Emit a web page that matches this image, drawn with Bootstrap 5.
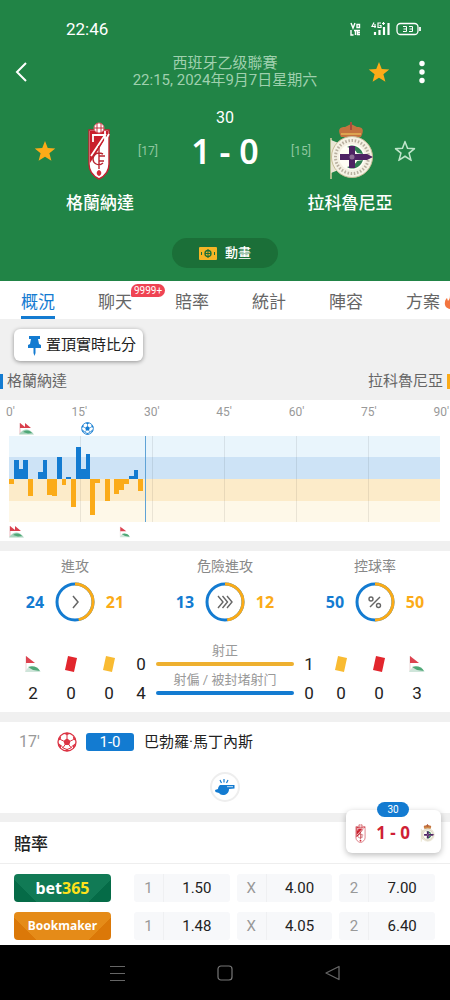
<!DOCTYPE html>
<html lang="zh-Hant">
<head>
<meta charset="utf-8">
<meta name="viewport" content="width=device-width, initial-scale=1">
<title>格蘭納達 1 - 0 拉科魯尼亞</title>
<link href="https://cdn.jsdelivr.net/npm/bootstrap@5.3.0/dist/css/bootstrap.min.css" rel="stylesheet">
<style>
:root{--blue:#137bd1;--gold:#fbab18;--green:#218446;--line:#f0f0f0}
body{font-family:Roboto,"Noto Sans CJK TC",sans-serif;font-size:15px;line-height:20px;color:#222;background:#fff;overflow-x:hidden}
button{font:inherit;color:inherit}
svg{display:block;flex:none}
.plain{background:none;border:0;padding:0}
.hero{background:var(--green);color:#fff;height:281px}
.statusbar{padding:19px 28px 0 66px;font-size:17px}
.topnav{padding:15px 25px 0 14px;height:50px}
.topnav .side-l{width:68px}
.topnav .side-r{width:57px}
.league{font-size:15px;line-height:17px;color:#9fd0ae}
.clock{font-size:16px;margin-top:19px}
.match{padding:0 34px;margin-top:-6px}
.scoreline{font-family:"Noto Sans",sans-serif;font-weight:600;font-size:34px;line-height:40px;width:72px;white-space:nowrap}
.match .rank{font-size:12px;color:#8fc69f;width:22px;margin:0 29px 0 17px}
.match .rank.away{margin:0 16px 0 30px}
.crest-box{width:44px}
.teamname{font-size:17px;line-height:24px;font-weight:500;width:150px}
.names{padding:0 25px;margin-top:11px}
.anim{background:#1b6f38;border:0;border-radius:16px;height:30px;width:106px;font-size:13px;font-weight:500;margin-top:23px}
.tabs{height:38px;padding-left:21px;gap:43px;font-size:17px;overflow:hidden}
.tabs a{color:#666;text-decoration:none;flex:none;height:38px;line-height:24px;padding-top:6px;position:relative;display:flex;align-items:center;border-bottom:3px solid transparent}
.tabs a.active{color:var(--blue);border-bottom-color:var(--blue)}
.count{position:absolute;left:33px;top:3px;height:13px;line-height:13px;border-radius:7px 7px 7px 2px;background:#ef4453;color:#fff;font-size:10px;padding:0 3px}
.band{background:var(--line)}
.pinbar{padding:10px 14px}
.pinbtn{background:#fff;border:0;border-radius:6px;height:32px;padding:0 7px 0 13px;box-shadow:0 1px 4px #0006}
.legend{height:29px;color:#666;padding-bottom:9px}
.legend i{width:3px;height:15px;background:var(--blue)}
.legend i.away{background:var(--gold)}
.axis{padding:4px 1px 0 6px;font-size:12px;line-height:17px;color:#999}
.momentum{padding:0 10px 0 9px}
.events90{display:grid;grid-template-columns:repeat(90,1fr);height:15px;align-items:center}
.corner-a{grid-column:3}.goal-a{grid-column:16}.corner-b{grid-column:1}.corner-c{grid-column:24}
.events90 svg{margin-right:-20px}
.events90.low{height:19px}
.gap-band{height:10px;background:var(--line)}
.gap-band.thin{height:9px}
.stats{padding-top:6px;height:161px}
.stats h3{font-size:14px;line-height:18px;font-weight:400;color:#888;margin:0 0 7px}
.versus{font-family:"Noto Sans",sans-serif;font-weight:700;font-size:16px;gap:10px}
.versus span{width:20px}
.home-c{color:var(--blue)}.away-c{color:var(--gold)}
.tally{display:grid;grid-template-columns:38px 38px 38px 26px 1fr 26px 38px 38px 38px;grid-auto-rows:29px;padding:0 14px;margin-top:22px;align-items:end;justify-items:center;font-size:17px;line-height:18px}
.shots{width:100%;padding:0 2px 7px;text-align:center;font-size:13px;line-height:14px;color:#999;white-space:nowrap}
.bar-h{height:4px;border-radius:2px;margin-top:4px;background:var(--blue)}
.bar-h.away{background:#eeb02f}
.feed{height:91px;padding:10px 19px 0}
.feed .minute{width:38px;font-size:16px;color:#999}
.tag-score{background:var(--blue);color:#fff;border-radius:3px;width:48px;height:18px;line-height:18px;text-align:center;margin:0 10px 0 9px}
.whistle{width:30px;height:30px;border:2px solid #eee;border-radius:50%;margin-top:20px}
.odds{position:relative;padding-bottom:5px}
.odds h2{font-size:17px;line-height:24px;font-weight:500;margin:0;padding:10px 14px 7px;border-bottom:1px solid #eee}
.oddsrow{padding:10px 15px 0 14px;gap:7px}
.book{width:97px;height:28px;border:0;border-radius:4px;color:#fff;margin-right:16px;padding:0;line-height:28px;font-family:"Noto Sans",sans-serif;font-weight:700;background:linear-gradient(45deg,#056b47 18%,#117a55 18% 50%,transparent 50%),linear-gradient(-45deg,#056b47 18%,#117a55 18%)}
.book.b365{font-size:16px}
.book.b365 span{color:#ffe11b}
.book.maker{font-size:12px;background:linear-gradient(45deg,#db7808 18%,#e58b18 18% 50%,transparent 50%),linear-gradient(-45deg,#db7808 18%,#e58b18 18%)}
.price{flex:1 1 0;height:28px;line-height:28px;background:#f7f8fa;border:0;border-radius:3px;padding:0}
.price small{width:30px;font-size:15px;color:#999;border-right:1px solid #eff0f2}
.mini{position:absolute;right:9px;top:-12px;width:95px;height:43px;background:#fff;border:0;border-radius:6px;box-shadow:0 2px 6px #0004;padding:3px 6px 0 9px}
.mini b{font-family:"Noto Sans",sans-serif;font-weight:700;font-size:17px;color:#cf1f35}
.mini .now{position:absolute;left:31px;top:-8px;width:32px;height:15px;line-height:15px;border-radius:8px;background:var(--blue);color:#fff;font-size:10px}
.sysnav{background:#000;height:55px;padding:0 109px}
</style>
</head>
<body class="d-flex flex-column min-vh-100">
<svg width="0" height="0" class="position-absolute" aria-hidden="true">
  <symbol id="star" viewBox="0 0 24 24"><path d="M12 1l3 7.800 8.200.5-6.400 5.200 2.200 8.200L12 18.200 5 22.700l2.200-8.200L.8 9.300 9 8.800z"/></symbol>
  <symbol id="ball" viewBox="0 0 24 24"><circle cx="12" cy="12" r="10.800" fill="#fff" stroke="currentColor" stroke-width="1.600"/><path fill="currentColor" d="M12 7.600l4.300 3.100-1.600 5H9.300l-1.600-5zM8.200 1.800L12 4l3.800-2.200L12 .8zM1 10.500l3.400-1.300.6-4-3 2.600zM23 10.500l-3.400-1.300-.6-4 3 2.600zM4.600 20l.4-4-3-2.400L3 18zM19.400 20l-.4-4 3-2.400L21 18zM9 22.600l3-2.400 3 2.400-3 .6z"/><path fill="none" stroke="currentColor" stroke-width="1.200" d="M12 8V3.500M16 10.800l4-1.800M14.500 15.500l2.500 3.500M9.500 15.500L7 19M8 10.800L4 9M5 16l2 3 5 2 5-2 2-3"/></symbol>
  <symbol id="corner" viewBox="0 0 18 18"><path d="M2 1v15" stroke="#ead6d6"/><path d="M2 1l9 7H2z" fill="#dd4350"/><path d="M1 17c2-5 6-6 9-5 3 0 4 3 7 5z" fill="#cfe5da"/><path d="M4 12c5-2 10 0 12 4l-7-1z" fill="#4fa877"/></symbol>
  <symbol id="corners" viewBox="0 0 16 12"><path d="M1 0v11" stroke="#e9b5bb"/><path d="M1 0l5 4V0l6 5H1z" fill="#d93f4c"/><path d="M0 11.500c4-6 10-7 15 0z" fill="#a9d3bd"/><path d="M4 9c3-2 6-2 9 1l-4 .5z" fill="#4fa877"/></symbol>
  <symbol id="cardshape" viewBox="0 0 14 18"><path d="M4 1l9 2-3 14-9-2z" fill="currentColor"/></symbol>
  <symbol id="granada" viewBox="0 0 24 58">
    <path d="M2 8h20v34c0 7-4 12-10 15C6 54 2 49 2 42z" fill="#fff" stroke="#c2212f" stroke-width="1.400"/>
    <path d="M3 9h18v4L3 41z" fill="#c91f2c"/><path d="M5 13h13L4 34M6 13v7M18 9v13M22 12L11 31" stroke="#fff" stroke-width="1.800" fill="none"/>
    <circle cx="12" cy="6" r="5" fill="#fff" stroke="#d86b70" stroke-width="1"/><path d="M7 6h10M10 1v10M14 1v10" stroke="#c2212f" stroke-width=".9"/>
    <path d="M16 32c-6-3-10 1-10 5s5 8 10 4M12 24v23M12 34h6M12 39h5" stroke="#b8252f" stroke-width="1.400" fill="none"/>
    <path d="M12 48c3 1 3 5 0 6-3-1-3-5 0-6z" fill="#d12c38"/>
  </symbol>
  <symbol id="depor" viewBox="0 0 44 58">
    <path d="M2 16v41" stroke="#d9cfa4" stroke-width="1.500"/><path d="M2 18l10 4v25L2 51z" fill="#e9e6d5"/>
    <path d="M12 15c-4-8-1-10 4-10l6-3 6 3c5 0 8 2 4 10z" fill="#c4733f"/><path d="M21 0h2v8h-2z" fill="#a84c3c"/><path d="M12 12h20" stroke="#e6b557" stroke-width="1.500"/>
    <circle cx="23" cy="35" r="20.500" fill="#f5f1e4" stroke="#c8bd97"/>
    <circle cx="23" cy="35" r="16.500" fill="none" stroke="#b9b0a0" stroke-width="3" stroke-dasharray="1.500 1.700"/>
    <circle cx="23" cy="35" r="13" fill="#fffdf5"/>
    <path d="M18 25c6-4 14 0 16 7l-6-1c-1-3-5-5-10-6zM18 45c6 4 14 0 16-7l-6 1c-1 3-5 5-10 6z" fill="#2e7e51"/>
    <path d="M11 32h9v-8h6v8h12l6 3-6 3H26v8h-6v-8h-9z" fill="#4e2364"/><circle cx="23" cy="35" r="2.500" fill="#8a6b93"/>
  </symbol>
</svg>

<header class="hero">
  <div class="statusbar d-flex justify-content-between align-items-center">
    <span>22:46</span>
    <svg width="72" height="16" viewBox="0 0 72 16" fill="none" stroke="#fff" role="img" aria-label="VoLTE 4G+ 33%">
      <path d="M1 2l2 5 2-5M7 3.500h2.500v3H7zM1 9v5h2.500M4 9.500h3M5.500 9v5M10 9.500H7.500v4H10M7.500 11.500H10" stroke-width="1.400"/>
      <path d="M24 1.500l-2 4h4M25 3v4M31 2h-3v4.500h3V4.500h-1.500M32 2.500h3M33.500 1v3" stroke-width="1.200"/>
      <path d="M25 11v3M29.500 9v5M34 6v8M38.500 2v12" stroke-width="2.200"/>
      <rect x="47" y="2.500" width="21" height="11" rx="3.500" stroke-width="1.300"/><path d="M70 6v4" stroke-width="1.800"/>
      <path d="M53 5.500h3.500v5H53M53.500 8h3M59 5.500h3.500v5H59M59.500 8h3" stroke-width="1"/>
    </svg>
  </div>
  <nav class="topnav d-flex align-items-center justify-content-between">
    <button class="plain side-l" aria-label="返回"><svg width="14" height="20" viewBox="0 0 14 20" fill="none" stroke="#fff" stroke-width="2"><path d="M12 1L3 10l9 9"/></svg></button>
    <div class="league text-center">西班牙乙级聯賽<br>22:15, 2024年9月7日星期六</div>
    <div class="side-r d-flex justify-content-between align-items-center">
      <button class="plain" aria-label="收藏"><svg width="22" height="22" fill="#fdab18"><use href="#star"/></svg></button>
      <button class="plain" aria-label="更多"><svg width="8" height="24" viewBox="0 0 8 24" fill="#fff"><circle cx="5" cy="3.500" r="2.700"/><circle cx="5" cy="12" r="2.700"/><circle cx="5" cy="20.500" r="2.700"/></svg></button>
    </div>
  </nav>
  <div class="clock text-center">30</div>
  <div class="match d-flex align-items-center justify-content-between">
    <button class="plain" aria-label="收藏格蘭納達"><svg width="22" height="22" fill="#fdab18"><use href="#star"/></svg></button>
    <div class="d-flex align-items-center">
      <div class="crest-box d-flex justify-content-center"><svg width="24" height="58"><use href="#granada"/></svg></div>
      <span class="rank">[17]</span>
      <span class="scoreline text-center">1 - 0</span>
      <span class="rank away">[15]</span>
      <svg width="44" height="58"><use href="#depor"/></svg>
    </div>
    <button class="plain" aria-label="收藏拉科魯尼亞"><svg width="22" height="22" viewBox="-1 -1 26 26" fill="none" stroke="#bfe5ca" stroke-width="1.800"><use href="#star" width="24" height="24"/></svg></button>
  </div>
  <div class="names d-flex justify-content-between text-center">
    <div class="teamname">格蘭納達</div><div class="teamname">拉科魯尼亞</div>
  </div>
  <button class="anim d-flex align-items-center justify-content-center gap-2 mx-auto">
    <svg width="18" height="13" viewBox="0 0 18 13"><rect width="18" height="13" rx="1" fill="#f6b526"/><circle cx="9" cy="6.500" r="3" fill="none" stroke="#1b6f38" stroke-width="1.300"/><path d="M9 2v9M6 6.500h6M2.500 5v3M15.500 5v3" stroke="#1b6f38"/></svg>
    動畫
  </button>
</header>

<nav class="tabs d-flex bg-white">
  <a href="#" class="active">概況</a>
  <a href="#">聊天<span class="count">9999+</span></a>
  <a href="#">賠率</a>
  <a href="#">統計</a>
  <a href="#">陣容</a>
  <a href="#">方案<svg class="ms-1" width="14" height="17" viewBox="0 0 14 17"><path d="M6 1c1 3 6 5 6 10 0 4-3 5-5 5-4 0-7-3-6-7 0-2 1-3 2-4l1 3c2-2 2-4 2-7z" fill="#f3753f"/></svg></a>
</nav>

<main class="flex-grow-1">
  <div class="band">
    <div class="pinbar">
      <button class="pinbtn d-flex align-items-center gap-1">
        <svg width="15" height="21" viewBox="0 0 15 21" fill="#137bd1"><path d="M2 1h11v3h-2l1 5 2 1v3H1v-3l2-1 1-5H2z"/><path d="M6.500 13h2v5l-1 3-1-3z"/></svg>置頂實時比分
      </button>
    </div>
    <div class="legend d-flex align-items-center justify-content-between">
      <span class="d-flex align-items-center gap-1"><i></i>格蘭納達</span>
      <span class="d-flex align-items-center gap-1">拉科魯尼亞<i class="away"></i></span>
    </div>
  </div>

  <section class="bg-white">
    <div class="axis d-flex justify-content-between"><span>0'</span><span>15'</span><span>30'</span><span>45'</span><span>60'</span><span>75'</span><span>90'</span></div>
    <div class="momentum">
      <div class="events90">
        <svg class="corner-a" width="16" height="12"><use href="#corners"/></svg>
        <svg class="goal-a home-c" width="13" height="13"><use href="#ball"/></svg>
      </div>
      <svg width="100%" height="86" viewBox="0 0 90 86" preserveAspectRatio="none" shape-rendering="crispEdges" role="img" aria-label="攻勢圖">
        <path fill="#e9f5fc" d="M0 0h90v22H0z"/><path fill="#cde3f6" d="M0 21h90v22H0z"/><path fill="#fcebc9" d="M0 43h90v22H0z"/><path fill="#fef8e8" d="M0 65h90v21H0z"/>
        <path d="M15 0v86M30 0v86M45 0v86M60 0v86M75 0v86" stroke="#00000014" vector-effect="non-scaling-stroke"/>
        <path fill="#137bd1" d="M1 43V24h1v9h1v-9h1v19zM6 43v-7h1V24h1v19zM10 43V21h1v22zM12 43v-2h1v2zM14 43V11h1v22h1V18h1v25zM25 43v-3h1v-6h1v9z"/>
        <path fill="#fbab18" d="M0 43v5h1v-5zM4 43v17h1V43zM8 43v16h1v1h1V43zM11 43v6h1v-6zM13 43v28h1V43zM17 43v36h1V47h1v-4zM20 43v22h1V43zM22 43v15h1v-4h1v-6h1v-5zM27 43v12h1V43z"/>
        <path d="M28.400 0v86" stroke="#5fa3d6" vector-effect="non-scaling-stroke"/>
      </svg>
      <div class="events90 low">
        <svg class="corner-b" width="16" height="12"><use href="#corners"/></svg>
        <svg class="corner-c" width="12" height="12"><use href="#corner"/></svg>
      </div>
    </div>
  </section>
  <div class="gap-band"></div>

  <section class="stats bg-white">
    <div class="row g-0 text-center">
      <div class="col-4">
        <h3>進攻</h3>
        <div class="versus d-flex align-items-center justify-content-center"><span class="home-c">24</span>
          <svg width="40" height="40" viewBox="0 0 40 40" fill="none" stroke-width="3"><circle cx="20" cy="20" r="18" stroke="#137bd1"/><circle cx="20" cy="20" r="18" stroke="#fbab18" pathLength="45" stroke-dasharray="21 24" transform="rotate(-90 20 20)"/><path d="M18 14l5 6-5 6" stroke="#666" stroke-width="1.500"/></svg>
          <span class="away-c">21</span></div>
      </div>
      <div class="col-4">
        <h3>危險進攻</h3>
        <div class="versus d-flex align-items-center justify-content-center"><span class="home-c">13</span>
          <svg width="40" height="40" viewBox="0 0 40 40" fill="none" stroke-width="3"><circle cx="20" cy="20" r="18" stroke="#137bd1"/><circle cx="20" cy="20" r="18" stroke="#fbab18" pathLength="25" stroke-dasharray="12 13" transform="rotate(-90 20 20)"/><path d="M13 14l5 6-5 6M17.500 14l5 6-5 6M22 14l5 6-5 6" stroke="#666" stroke-width="1.400"/></svg>
          <span class="away-c">12</span></div>
      </div>
      <div class="col-4">
        <h3>控球率</h3>
        <div class="versus d-flex align-items-center justify-content-center"><span class="home-c">50</span>
          <svg width="40" height="40" viewBox="0 0 40 40" fill="none" stroke-width="3"><circle cx="20" cy="20" r="18" stroke="#137bd1"/><circle cx="20" cy="20" r="18" stroke="#fbab18" pathLength="2" stroke-dasharray="1 1" transform="rotate(-90 20 20)"/><g stroke="#666" stroke-width="1.400"><path d="M25 15L15 25"/><circle cx="16" cy="17" r="2"/><circle cx="23.500" cy="23.500" r="2"/></g></svg>
          <span class="away-c">50</span></div>
      </div>
    </div>
    <div class="tally">
      <svg width="18" height="18"><use href="#corner"/></svg>
      <svg width="14" height="18" color="#e2262d"><use href="#cardshape"/></svg>
      <svg width="14" height="18" color="#f9bb32"><use href="#cardshape"/></svg>
      <span>0</span>
      <div class="shots">射正<div class="bar-h away"></div></div>
      <span>1</span>
      <svg width="14" height="18" color="#f9bb32"><use href="#cardshape"/></svg>
      <svg width="14" height="18" color="#e2262d"><use href="#cardshape"/></svg>
      <svg width="18" height="18"><use href="#corner"/></svg>
      <span>2</span><span>0</span><span>0</span><span>4</span>
      <div class="shots">射偏 / 被封堵射门<div class="bar-h"></div></div>
      <span>0</span><span>0</span><span>0</span><span>3</span>
    </div>
  </section>
  <div class="gap-band"></div>

  <section class="feed bg-white">
    <div class="d-flex align-items-center">
      <span class="minute">17'</span>
      <svg width="20" height="20" color="#dc3545"><use href="#ball"/></svg>
      <span class="tag-score">1-0</span>
      <span>巴勃羅·馬丁內斯</span>
    </div>
    <div class="whistle d-flex align-items-center justify-content-center mx-auto">
      <svg width="20" height="17" viewBox="0 0 20 17" fill="#137bd1"><path d="M5 6h14.500v3.500L14 10c0 4-3 6-6 6-2 0-3-1-4-2l-3.500-1L0 11l3-1c0-2 1-3 2-4z"/><path d="M5 1l1.500 3M9 0v3.500M13 1l-1.500 3" stroke="#137bd1" stroke-width="1.200"/><path d="M12 7.700h6" stroke="#fff" stroke-width=".8"/></svg>
    </div>
  </section>
  <div class="gap-band thin"></div>

  <section class="odds bg-white">
    <h2>賠率</h2>
    <div class="oddsrow d-flex align-items-center">
      <button class="book b365">bet<span>365</span></button>
      <button class="price d-flex"><small>1</small><span class="flex-grow-1">1.50</span></button>
      <button class="price d-flex"><small>X</small><span class="flex-grow-1">4.00</span></button>
      <button class="price d-flex"><small>2</small><span class="flex-grow-1">7.00</span></button>
    </div>
    <div class="oddsrow d-flex align-items-center">
      <button class="book maker">Bookmaker</button>
      <button class="price d-flex"><small>1</small><span class="flex-grow-1">1.48</span></button>
      <button class="price d-flex"><small>X</small><span class="flex-grow-1">4.05</span></button>
      <button class="price d-flex"><small>2</small><span class="flex-grow-1">6.40</span></button>
    </div>
    <button class="mini d-flex align-items-center justify-content-between">
      <span class="now">30</span>
      <svg width="11" height="19" viewBox="0 0 24 58" preserveAspectRatio="none"><use href="#granada"/></svg>
      <b>1 - 0</b>
      <svg width="15" height="18"><use href="#depor"/></svg>
    </button>
  </section>
</main>

<footer class="sysnav d-flex align-items-center justify-content-between">
  <button class="plain" aria-label="選單"><svg width="17" height="16" viewBox="0 0 17 16" stroke="#666"><path d="M1 1.500h15M1 8.500h15M1 15.500h15"/></svg></button>
  <button class="plain" aria-label="主畫面"><svg width="16" height="16" viewBox="0 0 16 16" fill="none" stroke="#777" stroke-width="1.200"><rect x="1" y="1" width="14" height="14" rx="3"/></svg></button>
  <button class="plain" aria-label="返回"><svg width="17" height="16" viewBox="0 0 17 16" fill="none" stroke="#666" stroke-width="1.300" stroke-linejoin="round"><path d="M15 1.500v13L2 8z"/></svg></button>
</footer>
<script src="https://cdn.jsdelivr.net/npm/bootstrap@5.3.0/dist/js/bootstrap.bundle.min.js"></script>
</body>
</html>
